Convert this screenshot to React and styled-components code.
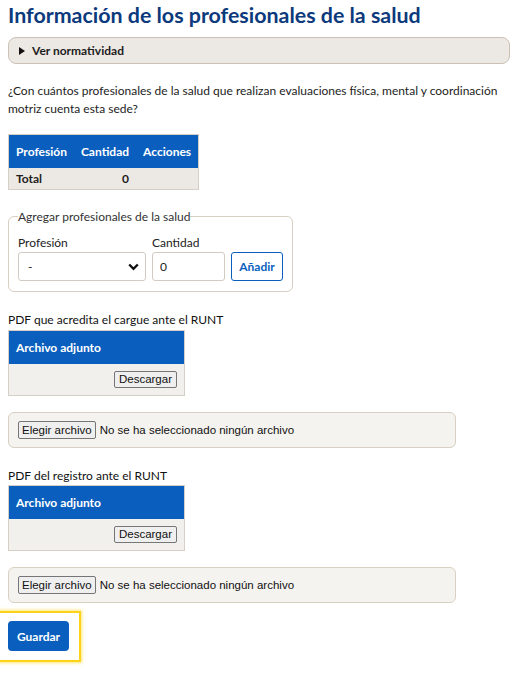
import React from "react";
import styled, { createGlobalStyle } from "styled-components";

const GlobalStyle = createGlobalStyle`
  html, body {
    margin: 0;
    padding: 0;
    background: #ffffff;
  }
  body {
    font-family: "Lato", "Noto Sans", sans-serif;
    color: #1d1d1d;
  }
`;

const Page = styled.div`
  width: 513px;
  box-sizing: border-box;
  padding: 0 3px 20px 8px;
`;

const Title = styled.h1`
  margin: 0;
  padding-top: 1px;
  font-size: 21.4px;
  line-height: 28px;
  font-weight: 700;
  color: #0c3a7c;
`;

const Details = styled.details`
  margin-top: 8px;
  background: #ece8e3;
  border: 1px solid #cbc1b5;
  border-radius: 8px;
  height: 27px;
  box-sizing: border-box;
`;

const Summary = styled.summary`
  font-size: 12px;
  font-weight: 700;
  line-height: 25px;
  padding-left: 10px;
  list-style: none;
  display: flex;
  align-items: center;
  gap: 7px;
  &::-webkit-details-marker { display: none; }
  &::before {
    content: "";
    width: 0;
    height: 0;
    border-left: 6px solid #111;
    border-top: 4px solid transparent;
    border-bottom: 4px solid transparent;
  }
`;

const Question = styled.p`
  margin: 18px 0 0;
  font-size: 12px;
  line-height: 18px;
`;

const Table = styled.table`
  border-collapse: collapse;
  margin-top: ${(p) => p.$top || 0}px;
  width: ${(p) => p.$width}px;
  border: 1px solid #d6cfc6;
  font-size: 12px;
`;

const HeadCell = styled.th`
  background: #0a5fbe;
  color: #ffffff;
  font-weight: 700;
  text-align: left;
  height: 33px;
  padding: 0 7px;
  white-space: nowrap;
`;

const BodyRow = styled.tr`
  background: ${(p) => p.$bg || "#ece8e3"};
`;

const Cell = styled.td`
  height: ${(p) => p.$h || 21}px;
  padding: 0 ${(p) => p.$pad ?? 7}px;
  font-weight: ${(p) => (p.$bold ? 700 : 400)};
  text-align: ${(p) => p.$align || "left"};
  vertical-align: middle;
`;

const Fieldset = styled.fieldset`
  margin: 19px 0 0;
  width: 285px;
  box-sizing: border-box;
  border: 1px solid #d8cec2;
  border-radius: 6px;
  padding: 11px 9px 10px;
`;

const Legend = styled.legend`
  font-size: 12px;
  line-height: 15px;
  padding: 0;
  margin-left: 0;
  color: #333;
`;

const Row = styled.div`
  display: flex;
  align-items: flex-end;
  gap: 6px;
`;

const Field = styled.label`
  display: flex;
  flex-direction: column;
  gap: 2px;
  font-size: 12px;
  line-height: 15px;
  color: #222;
`;

const Select = styled.div`
  width: 128px;
  height: 29px;
  box-sizing: border-box;
  border: 1px solid #d3cbc1;
  border-radius: 3px;
  display: flex;
  align-items: center;
  justify-content: space-between;
  padding: 0 6px 0 9px;
  font-size: 12px;
  background: #fff;
`;

const NumberBox = styled.div`
  width: 73px;
  height: 29px;
  box-sizing: border-box;
  border: 1px solid #d3cbc1;
  border-radius: 3px;
  padding-left: 7px;
  display: flex;
  align-items: center;
  font-size: 12px;
`;

const AddButton = styled.button`
  width: 52px;
  height: 29px;
  border: 1px solid #0a5fbe;
  border-radius: 3px;
  background: #fff;
  color: #0a5fbe;
  font-family: inherit;
  font-size: 12px;
  font-weight: 700;
  padding: 0;
`;

const Caption = styled.div`
  margin-top: ${(p) => p.$top}px;
  font-size: 12px;
  line-height: 14px;
  color: #111;
`;

const Download = styled.button`
  font-family: "Liberation Sans", Arial, sans-serif;
  font-size: 11.5px;
  height: 17px;
  padding: 0 4px;
  border: 1px solid #767676;
  background: #efefef;
  border-radius: 2px;
  color: #111;
  line-height: 15px;
`;

const FileBox = styled.div`
  margin-top: ${(p) => p.$top}px;
  width: 448px;
  height: 36px;
  box-sizing: border-box;
  background: #f5f3f0;
  border: 1px solid #d9cfc3;
  border-radius: 6px;
  display: flex;
  align-items: center;
  gap: 4px;
  padding-left: 9px;
  font-family: "Liberation Sans", Arial, sans-serif;
  font-size: 11.5px;
  color: #111;
`;

const ChooseButton = styled.button`
  font-family: inherit;
  font-size: 11.5px;
  height: 18px;
  padding: 0 3px;
  border: 1px solid #767676;
  background: #efefef;
  border-radius: 2px;
  line-height: 16px;
  color: #111;
`;

const Highlight = styled.div`
  position: relative;
  display: inline-block;
  margin-top: 18px;
  &::after {
    content: "";
    position: absolute;
    top: -10px;
    left: -10px;
    right: -12px;
    bottom: -11px;
    border: 2px solid #ffd21a;
    box-shadow: 0 0 3px 1px rgba(255, 220, 60, 0.7);
    pointer-events: none;
  }
`;

const SaveButton = styled.button`
  display: block;
  width: 61px;
  height: 30px;
  border: none;
  border-radius: 4px;
  background: #0a5fbe;
  color: #fff;
  font-family: inherit;
  font-size: 12px;
  font-weight: 700;
  padding: 0;
`;

const Chevron = () => (
  <svg width="11" height="8" viewBox="0 0 11 8">
    <path d="M1.2 1.5 L5.5 5.8 L9.8 1.5" fill="none" stroke="#111" strokeWidth="2.4" />
  </svg>
);

const Attachment = ({ top }) => (
  <Table $top={top} $width={177}>
    <thead>
      <tr>
        <HeadCell>Archivo adjunto</HeadCell>
      </tr>
    </thead>
    <tbody>
      <BodyRow $bg="#f2f0ed">
        <Cell $h={31} $align="right">
          <Download>Descargar</Download>
        </Cell>
      </BodyRow>
    </tbody>
  </Table>
);

const FileInput = ({ top }) => (
  <FileBox $top={top}>
    <ChooseButton>Elegir archivo</ChooseButton>
    <span>No se ha seleccionado ningún archivo</span>
  </FileBox>
);

export default function App() {
  return (
    <Page>
      <GlobalStyle />
      <Title>Información de los profesionales de la salud</Title>
      <Details>
        <Summary>Ver normatividad</Summary>
      </Details>
      <Question>
        ¿Con cuántos profesionales de la salud que realizan evaluaciones física, mental y coordinación
        motriz cuenta esta sede?
      </Question>
      <Table $top={16} $width={190}>
        <thead>
          <tr>
            <HeadCell>Profesión</HeadCell>
            <HeadCell>Cantidad</HeadCell>
            <HeadCell>Acciones</HeadCell>
          </tr>
        </thead>
        <tbody>
          <BodyRow>
            <Cell $bold>Total</Cell>
            <Cell $bold $align="right">0</Cell>
            <Cell />
          </BodyRow>
        </tbody>
      </Table>
      <Fieldset>
        <Legend>Agregar profesionales de la salud</Legend>
        <Row>
          <Field>
            Profesión
            <Select>
              <span>-</span>
              <Chevron />
            </Select>
          </Field>
          <Field>
            Cantidad
            <NumberBox>0</NumberBox>
          </Field>
          <AddButton>Añadir</AddButton>
        </Row>
      </Fieldset>
      <Caption $top={21}>PDF que acredita el cargue ante el RUNT</Caption>
      <Attachment top={3} />
      <FileInput top={16} />
      <Caption $top={21}>PDF del registro ante el RUNT</Caption>
      <Attachment top={2} />
      <FileInput top={16} />
      <Highlight>
        <SaveButton>Guardar</SaveButton>
      </Highlight>
    </Page>
  );
}
